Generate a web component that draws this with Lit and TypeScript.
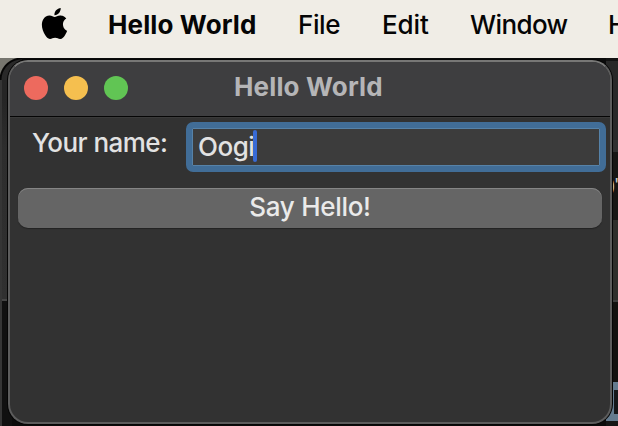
import { LitElement, html, css } from "lit";
import { customElement } from "lit/decorators.js";

@customElement("menu-bar")
class MenuBar extends LitElement {
  static styles = css`
    :host { display: flex; align-items: center; height: 58px; box-sizing: border-box; padding: 0 0 8px 39px; background: #f0ede6; color: #050505; font: 450 26px/32px Inter, sans-serif; white-space: nowrap; overflow: hidden; }
    .logo { flex: none; width: 31px; height: 31px; margin-top: -4px; }
    .item { flex: none; }
    .app { width: 148px; margin-left: 38px; font-weight: 700; letter-spacing: 0.12px; }
    .file { width: 42px; margin-left: 42px; letter-spacing: -0.4px; }
    .edit { width: 46px; margin-left: 42px; letter-spacing: -0.1px; }
    .window { width: 96px; margin-left: 42px; letter-spacing: -0.6px; }
    .help { margin-left: 42px; }
  `;
  render() {
    return html`
      <svg class="logo" viewBox="0 0 24 24"><path fill="#000" d="M12.152 6.896c-.948 0-2.415-1.078-3.96-1.04-2.04.027-3.91 1.183-4.961 3.014-2.117 3.675-.546 9.103 1.519 12.09 1.013 1.454 2.208 3.09 3.792 3.039 1.52-.065 2.09-.987 3.935-.987 1.831 0 2.35.987 3.96.948 1.637-.026 2.676-1.48 3.676-2.948 1.156-1.688 1.636-3.325 1.662-3.415-.039-.013-3.182-1.221-3.22-4.857-.026-3.04 2.48-4.494 2.597-4.559-1.429-2.09-3.623-2.324-4.39-2.376-2-.156-3.675 1.09-4.61 1.09zM15.53 3.83c.843-1.012 1.4-2.427 1.245-3.83-1.207.052-2.662.805-3.532 1.818-.78.896-1.454 2.338-1.273 3.714 1.338.104 2.715-.688 3.559-1.701"/></svg>
      <span class="item app">Hello World</span>
      <span class="item file">File</span>
      <span class="item edit">Edit</span>
      <span class="item window">Window</span>
      <span class="item help">Help</span>
    `;
  }
}

@customElement("hello-window")
class HelloWindow extends LitElement {
  static styles = css`
    :host { display: flex; flex-direction: column; box-sizing: border-box; border: 2px solid #5c5c5c; border-top-color: #777776; border-radius: 20px; background: #323232; box-shadow: 0 0 0 1px #050505; overflow: hidden; color: #e2e2e2; font: 450 26px/32px Inter, sans-serif; white-space: nowrap; }
    .bar { display: grid; grid-template-columns: 224px 1fr; align-items: center; height: 54px; border-bottom: 1px solid #050505; background: #3e3e40; box-shadow: 0 1px #3a3a3a; }
    .lights { display: flex; gap: 16px; padding-left: 14px; margin-top: -2px; }
    .light { width: 24px; height: 24px; border-radius: 50%; }
    .close { background: #ed6a5e; }
    .min { background: #f5bf4f; }
    .max { background: #61c554; }
    .title { color: #b5b5b7; font-weight: 700; letter-spacing: 0.15px; margin-top: -5px; }
    .row { display: flex; margin-top: 5px; }
    .label { width: 154px; margin: 5px 0 0 22px; letter-spacing: -0.55px; }
    .field { display: flex; align-items: center; box-sizing: border-box; width: 420px; height: 50px; border: 6px solid #416d97; border-radius: 7px; background: #3c3c3c; box-shadow: inset 0 0 0 1px #5682a8; padding-left: 6px; }
    .value { letter-spacing: -0.5px; }
    .caret { width: 4px; height: 32px; border-radius: 2px; background: #386bd5; margin: -2px 0 0 -1px; }
    .button { display: block; box-sizing: border-box; width: 584px; height: 40px; margin: 16px 0 0 8px; padding: 0; border: 0; border-radius: 10px; background: #656565; box-shadow: inset 0 1px #858585, 0 1px 1px #222; color: #eaeaea; font: inherit; letter-spacing: -0.3px; line-height: 37px; }
    .button span { display: block; margin-top: -3px; }
  `;
  render() {
    return html`
      <header class="bar">
        <div class="lights"><i class="light close"></i><i class="light min"></i><i class="light max"></i></div>
        <span class="title">Hello World</span>
      </header>
      <div class="row">
        <span class="label">Your name:</span>
        <div class="field"><span class="value">Oogi</span><i class="caret"></i></div>
      </div>
      <button class="button"><span>Say Hello!</span></button>
    `;
  }
}

@customElement("app-root")
class AppRoot extends LitElement {
  static styles = css`
    :host { display: block; position: relative; width: 618px; height: 426px; overflow: hidden; background: #111; }
    .desk { display: grid; grid-template-columns: 12px 1fr 12px; height: 368px; background: #0b0b0b; }
    .left { background: linear-gradient(90deg, #353535 2px, transparent 2px), linear-gradient(#252525 0 40px, #2d2d2d 90px, #303030 241px, #454545 241px 243px, #101010 243px); }
    .right { grid-column: 3; background: linear-gradient(#121212 0 3px, #282828 3px 82px, #303030 82px 94px, #171614 94px 162px, #2e2e2b 162px 242px, #3e3e3e 242px 244px, #12110f 244px 324px, #647b8f 324px 363px, #151515 363px); }
    .tile { position: absolute; left: 614px; top: 390px; width: 4px; height: 24px; background: #16181a; }
    .corner { position: absolute; left: 0; top: 58px; width: 22px; height: 22px; background: radial-gradient(circle at 100% 100%, #292929 20px, #050505 21px 22px, #77766f 23px); }
    .peek { position: absolute; left: 608.5px; top: 173px; color: #c5c5c5; font: 20px/24px "Liberation Sans", sans-serif; letter-spacing: -0.5px; white-space: nowrap; }
    hello-window { position: absolute; left: 8px; top: 60px; width: 604px; height: 364px; }
  `;
  render() {
    return html`
      <menu-bar></menu-bar>
      <div class="desk"><div class="left"></div><div class="right"></div></div>
      <div class="tile"></div>
      <div class="corner"></div>
      <span class="peek">)'</span>
      <hello-window></hello-window>
    `;
  }
}
